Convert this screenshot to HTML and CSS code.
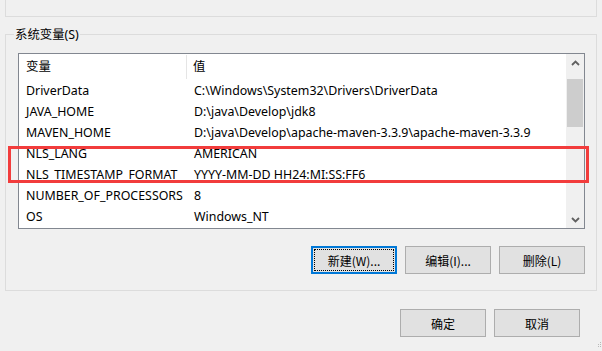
FILE: index.html
```html
<!DOCTYPE html>
<html lang="zh-CN">
<head>
<meta charset="utf-8">
<link rel="stylesheet" href="styles.css">
</head>
<body>
<div class="dialog">
  <div class="user-group"></div>
  <div class="sys-group">
    <div class="legend">系统变量(S)</div>
    <div class="listbox">
      <div class="list-main">
        <div class="list-head">
          <div class="c-name">变量</div>
          <div class="c-val">值</div>
        </div>
        <div class="row"><div class="c-name">DriverData</div><div class="c-val">C:\Windows\System32\Drivers\DriverData</div></div>
        <div class="row"><div class="c-name">JAVA_HOME</div><div class="c-val">D:\java\Develop\jdk8</div></div>
        <div class="row"><div class="c-name">MAVEN_HOME</div><div class="c-val">D:\java\Develop\apache-maven-3.3.9\apache-maven-3.3.9</div></div>
        <div class="row"><div class="c-name">NLS_LANG</div><div class="c-val">AMERICAN</div></div>
        <div class="row"><div class="c-name">NLS_TIMESTAMP_FORMAT</div><div class="c-val">YYYY-MM-DD HH24:MI:SS:FF6</div></div>
        <div class="row"><div class="c-name">NUMBER_OF_PROCESSORS</div><div class="c-val">8</div></div>
        <div class="row"><div class="c-name">OS</div><div class="c-val">Windows_NT</div></div>
      </div>
      <div class="vscroll">
        <div class="sb-btn"><svg width="9" height="6" viewBox="0 0 9 6"><polyline points="1,5 4.5,1.5 8,5" fill="none" stroke="#606060" stroke-width="1.8"/></svg></div>
        <div class="sb-track"><div class="sb-thumb"></div></div>
        <div class="sb-btn"><svg width="9" height="6" viewBox="0 0 9 6"><polyline points="1,1 4.5,4.5 8,1" fill="none" stroke="#606060" stroke-width="1.8"/></svg></div>
      </div>
    </div>
    <div class="btn-row">
      <div class="btn default"><span class="focus">新建(W)...</span></div>
      <div class="btn"><span>编辑(I)...</span></div>
      <div class="btn"><span>删除(L)</span></div>
    </div>
  </div>
  <div class="dlg-row">
    <div class="btn"><span>确定</span></div>
    <div class="btn"><span>取消</span></div>
  </div>
  <div class="highlight"></div>
  <svg class="grip" width="4" height="6" viewBox="0 0 4 6"><rect x="2" y="0" width="1" height="1" fill="#b8b8b8"/><rect x="2" y="2" width="1" height="1" fill="#b8b8b8"/><rect x="0" y="2" width="1" height="1" fill="#b8b8b8"/><rect x="2" y="4" width="1" height="1" fill="#b8b8b8"/><rect x="0" y="4" width="1" height="1" fill="#b8b8b8"/></svg>
</div>
</body>
</html>
```

FILE: styles.css
```css
html, body {
  margin: 0;
  padding: 0;
}
body {
  background: #f0f0f0;
  font-family: "Segoe UI", "Noto Sans", "Noto Sans CJK SC", sans-serif;
  font-size: 12.4px;
  color: #000;
}
.dialog {
  position: relative;
  width: 602px;
  height: 351px;
  overflow: hidden;
}
.user-group {
  margin: 0 5px;
  height: 16px;
  border: 1px solid #dcdcdc;
  border-top: none;
}
.sys-group {
  margin: 17px 5px 0 5px;
  height: 255px;
  border: 1px solid #dcdcdc;
  display: flex;
  flex-direction: column;
}
.legend {
  align-self: flex-start;
  margin: -8px 0 0 8px;
  padding: 0 1px 0 1px;
  background: #f0f0f0;
  line-height: 16px;
  height: 16px;
}
.listbox {
  margin: 10px 11px 0 12px;
  height: 174px;
  border: 1px solid #828790;
  background: #fff;
  display: flex;
}
.list-main {
  flex: 1;
  display: flex;
  flex-direction: column;
}
.list-head {
  display: flex;
  height: 26px;
  align-items: stretch;
}
.list-head .c-name {
  border-right: 1px solid #e5e5e5;
  margin: 1px 0 1px 0;
  line-height: 24px;
}
.list-head .c-val {
  line-height: 26px;
}
.row {
  display: flex;
  height: 21px;
  line-height: 21px;
  white-space: nowrap;
}
.c-name {
  width: 161px;
  padding-left: 7px;
  flex: none;
  white-space: nowrap;
}
.list-head .c-name {
  width: 160px;
}
.c-val {
  padding-left: 6px;
  white-space: nowrap;
}
.row .c-name {
  width: 162px;
}
.vscroll {
  width: 18px;
  background: #f0f0f0;
  display: flex;
  flex-direction: column;
}
.sb-btn {
  height: 17px;
  display: flex;
  align-items: center;
  justify-content: center;
}
.sb-track {
  flex: 1;
  padding: 8px 1px 0 1px;
}
.sb-thumb {
  height: 48px;
  background: #cdcdcd;
}
.btn-row {
  display: flex;
  justify-content: flex-end;
  gap: 8px;
  margin: 17px 11px 0 0;
}
.btn {
  width: 84px;
  height: 26px;
  border: 1px solid #adadad;
  background: #e1e1e1;
  display: flex;
  align-items: center;
  justify-content: center;
  font-family: "Noto Sans CJK SC", "Noto Sans", sans-serif;
  font-size: 12px;
}
.btn.default {
  width: 82px;
  height: 24px;
  border: 2px solid #0078d7;
}
.focus {
  display: flex;
  align-items: center;
  justify-content: center;
  width: 78px;
  height: 20px;
  border: 1px dotted #000;
}
.dlg-row {
  display: flex;
  justify-content: flex-end;
  gap: 8px;
  margin: 18px 22px 0 0;
}
.highlight {
  position: absolute;
  left: 8px;
  top: 146px;
  width: 575px;
  height: 31px;
  border: 3px solid #f23c3c;
}
.grip {
  position: absolute;
  right: 0;
  bottom: 3px;
}
```
